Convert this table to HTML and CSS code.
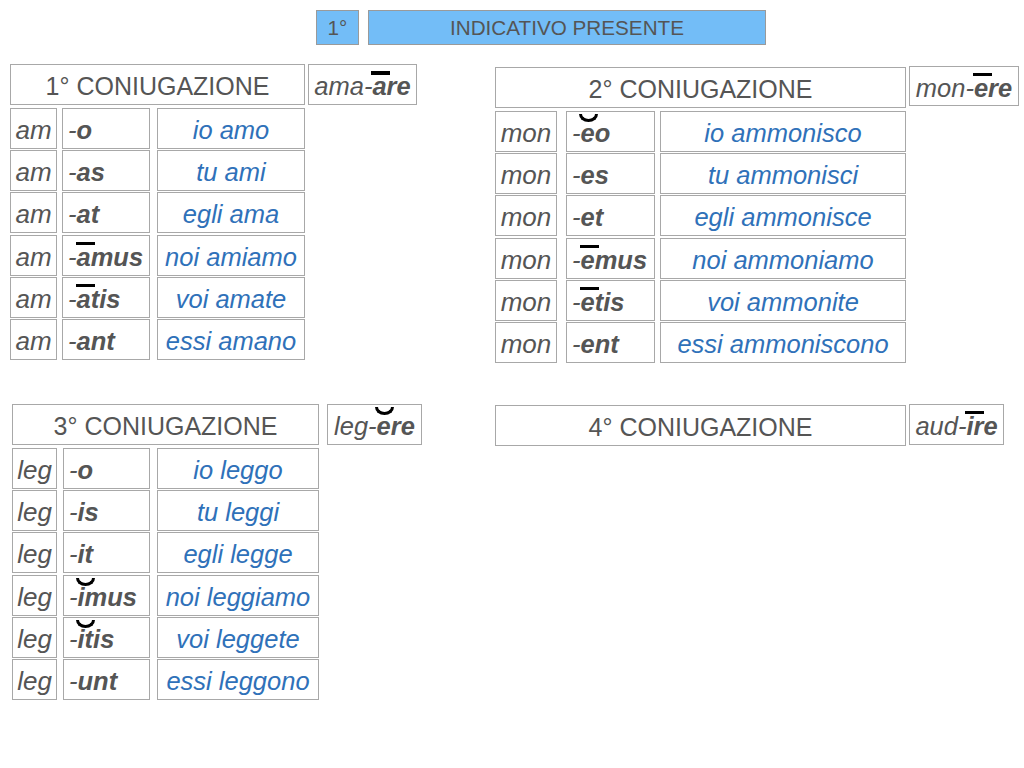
FILE: index.html
```html
<!DOCTYPE html>
<html lang="it">
<head>
<meta charset="utf-8">
<title>Indicativo presente</title>
<link rel="stylesheet" href="styles.css">
</head>
<body>
<header class="topbar">
  <div class="tag">1°</div>
  <div class="title">INDICATIVO PRESENTE</div>
</header>
<main class="grid">
  <section class="conj c1">
    <div class="head">
      <div class="box name">1° CONIUGAZIONE</div>
      <div class="box inf">ama-<b><span class="long">a</span>re</b></div>
    </div>
    <div class="rows">
      <div class="row"><div class="box stem">am</div><div class="box end">-<b>o</b></div><div class="box tr">io amo</div></div>
      <div class="row"><div class="box stem">am</div><div class="box end">-<b>as</b></div><div class="box tr">tu ami</div></div>
      <div class="row"><div class="box stem">am</div><div class="box end">-<b>at</b></div><div class="box tr">egli ama</div></div>
      <div class="row"><div class="box stem">am</div><div class="box end">-<b><span class="long">a</span>mus</b></div><div class="box tr">noi amiamo</div></div>
      <div class="row"><div class="box stem">am</div><div class="box end">-<b><span class="long">a</span>tis</b></div><div class="box tr">voi amate</div></div>
      <div class="row"><div class="box stem">am</div><div class="box end">-<b>ant</b></div><div class="box tr">essi amano</div></div>
    </div>
  </section>
  <section class="conj c2">
    <div class="head">
      <div class="box name">2° CONIUGAZIONE</div>
      <div class="box inf">mon-<b><span class="long">e</span>re</b></div>
    </div>
    <div class="rows">
      <div class="row"><div class="box stem">mon</div><div class="box end">-<b><span class="short">e</span>o</b></div><div class="box tr">io ammonisco</div></div>
      <div class="row"><div class="box stem">mon</div><div class="box end">-<b>es</b></div><div class="box tr">tu ammonisci</div></div>
      <div class="row"><div class="box stem">mon</div><div class="box end">-<b>et</b></div><div class="box tr">egli ammonisce</div></div>
      <div class="row"><div class="box stem">mon</div><div class="box end">-<b><span class="long">e</span>mus</b></div><div class="box tr">noi ammoniamo</div></div>
      <div class="row"><div class="box stem">mon</div><div class="box end">-<b><span class="long">e</span>tis</b></div><div class="box tr">voi ammonite</div></div>
      <div class="row"><div class="box stem">mon</div><div class="box end">-<b>ent</b></div><div class="box tr">essi ammoniscono</div></div>
    </div>
  </section>
  <section class="conj c3">
    <div class="head">
      <div class="box name">3° CONIUGAZIONE</div>
      <div class="box inf">leg-<b><span class="short">e</span>re</b></div>
    </div>
    <div class="rows">
      <div class="row"><div class="box stem">leg</div><div class="box end">-<b>o</b></div><div class="box tr">io leggo</div></div>
      <div class="row"><div class="box stem">leg</div><div class="box end">-<b>is</b></div><div class="box tr">tu leggi</div></div>
      <div class="row"><div class="box stem">leg</div><div class="box end">-<b>it</b></div><div class="box tr">egli legge</div></div>
      <div class="row"><div class="box stem">leg</div><div class="box end">-<b><span class="short">i</span>mus</b></div><div class="box tr">noi leggiamo</div></div>
      <div class="row"><div class="box stem">leg</div><div class="box end">-<b><span class="short">i</span>tis</b></div><div class="box tr">voi leggete</div></div>
      <div class="row"><div class="box stem">leg</div><div class="box end">-<b>unt</b></div><div class="box tr">essi leggono</div></div>
    </div>
  </section>
  <section class="conj c4">
    <div class="head">
      <div class="box name">4° CONIUGAZIONE</div>
      <div class="box inf">aud-<b><span class="long">i</span>re</b></div>
    </div>
  </section>
</main>
</body>
</html>
```
FILE: styles.css
```css
* { box-sizing: border-box; }

body {
  margin: 0;
  background: #ffffff;
  font-family: "Liberation Sans", Helvetica, Arial, sans-serif;
  color: #555555;
}

.topbar {
  display: flex;
  padding: 10px 0 0 316px;
  height: 45px;
}

.tag, .title {
  height: 35px;
  background: #73bdf7;
  border: 1px solid #9a9a9a;
  display: flex;
  align-items: center;
  justify-content: center;
  font-size: 20.7px;
  color: #555555;
}

.tag { width: 43px; }
.title { width: 398px; margin-left: 9px; }

.grid {
  display: grid;
  grid-template-columns: 495px 1fr;
  align-items: start;
  row-gap: 41px;
  margin-top: 19px;
}

.head { display: flex; align-items: flex-start; }

.box {
  height: 41px;
  padding-top: 4px;
  border: 1px solid #a8a8a8;
  background: #ffffff;
  display: flex;
  align-items: center;
  white-space: nowrap;
  font-size: 25.5px;
}

.name {
  justify-content: center;
  font-size: 25px;
  color: #555555;
}

.inf {
  justify-content: center;
  font-style: italic;
  font-size: 25.5px;
  margin-left: 3px;
}

.inf b, .end b { font-weight: bold; }

.rows {
  display: flex;
  flex-direction: column;
  gap: 1.2px;
  margin-top: 3px;
}

.row { display: flex; }

.stem {
  justify-content: center;
  font-style: italic;
  font-size: 26px;
}

.end {
  font-style: italic;
  padding-left: 5px;
}

.tr {
  justify-content: center;
  font-style: italic;
  color: #2f71b9;
}

.long, .short { position: relative; }

.long::before {
  content: "";
  position: absolute;
  left: -1px;
  top: -1px;
  width: 19px;
  height: 3.5px;
  background: #000000;
}

.short::before {
  content: "";
  position: absolute;
  left: -2px;
  top: -5px;
  width: 13px;
  height: 5px;
  border: 3.5px solid #000000;
  border-top: 0;
  border-radius: 0 0 50% 50% / 0 0 100% 100%;
}

/* 1st conjugation */
.c1 { margin-left: 10px; }
.c1 .name { width: 295px; }
.c1 .inf { width: 109px; }
.c1 .stem { width: 47px; }
.c1 .end { width: 88px; margin-left: 5px; }
.c1 .tr { width: 148px; margin-left: 7px; }

/* 2nd conjugation */
.c2 { margin-top: 3px; }
.c2 .name { width: 411px; }
.c2 .inf { width: 110px; margin-top: -1px; height: 40px; }
.c2 .stem { width: 62px; }
.c2 .end { width: 89px; margin-left: 9px; }
.c2 .tr { width: 246px; margin-left: 5px; }

/* 3rd conjugation */
.c3 { margin-left: 12px; }
.c3 .name { width: 307px; }
.c3 .inf { width: 95px; margin-left: 8px; }
.c3 .stem { width: 45px; }
.c3 .end { width: 87px; margin-left: 6px; }
.c3 .tr { width: 162px; margin-left: 7px; }

/* 4th conjugation */
.c4 { margin-top: 1px; }
.c4 .name { width: 411px; }
.c4 .inf { width: 95px; margin-top: -1px; }
```
